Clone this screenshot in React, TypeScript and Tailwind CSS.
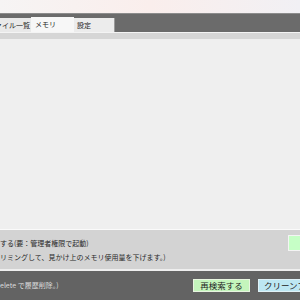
export default function App() {
  return (
    <div className="flex h-[300px] w-[300px] flex-col overflow-hidden bg-[#efefef] font-['Noto_Sans_CJK_JP','Noto_Sans',sans-serif] text-[7px] leading-none text-[#222]">
      <div className="h-[13px] shrink-0 bg-gradient-to-r from-[#f6f4f4] via-[#faeeec] to-[#f1f0f4]" />

      {/* tab strip */}
      <div className="flex h-[19px] shrink-0 items-end border-t border-[#8c8c8c] bg-[#6b6b6b]">
        <div className="flex h-[14px] w-[31px] items-center justify-end overflow-hidden bg-[#e9e9e9] pr-[1px] whitespace-nowrap">
          ファイル一覧
        </div>
        <div className="flex h-[15px] w-[43px] items-center bg-[#f7f7f7] pl-[4px]">メモリ</div>
        <div className="flex h-[14px] w-[41px] items-center border-r border-[#9a9a9a] bg-[#ececec] pl-[3px]">
          設定
        </div>
      </div>
      <div className="h-[1px] shrink-0 bg-[#f4f4f4]" />
      <div className="h-[6px] shrink-0 bg-[#d6d6d6]" />

      <div className="flex-1 bg-[#efefef]" />

      {/* options panel */}
      <div className="flex h-[40px] shrink-0 items-start justify-between border-t border-[#fafafa] bg-[#d3d3d3]">
        <div className="flex flex-col gap-[7px] pt-[10px] whitespace-nowrap text-[#2a2a2a]">
          <span>する(要：管理者権限で起動)</span>
          <span>リミングして、見かけ上のメモリ使用量を下げます。)</span>
        </div>
        <div className="mt-[5px] -mr-[3px] h-[16px] w-[15px] border border-[#f4f4f4] bg-[#c6ffc6]" />
      </div>

      {/* footer */}
      <div className="flex h-[31px] shrink-0 items-center justify-between border-t-2 border-[#eeeeee] bg-[#636363] pb-[1px]">
        <span className="whitespace-nowrap text-[#dcdcdc]">elete で履歴削除。)</span>
        <div className="flex items-center gap-[8px] -mr-[10px] text-[8.5px]">
          <div className="flex h-[13px] w-[57px] items-center justify-center border border-[#e8f5e0] bg-[#c4f5bc] text-[#222]">
            再検索する
          </div>
          <div className="flex h-[13px] w-[52px] items-center overflow-hidden border border-[#e0f2f8] bg-[#bde7f3] pl-[5px] whitespace-nowrap text-[#222]">
            クリーンアップ
          </div>
        </div>
      </div>
    </div>
  )
}
